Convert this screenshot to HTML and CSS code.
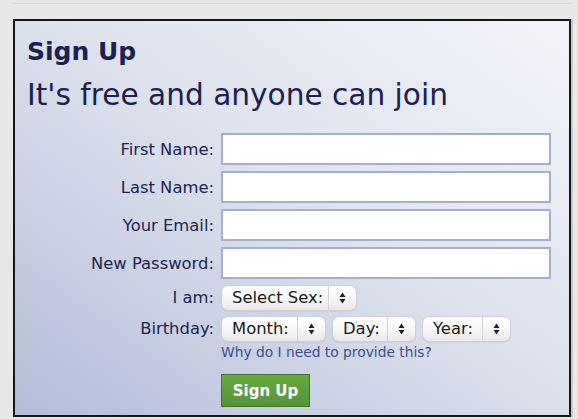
FILE: index.html
```html
<!DOCTYPE html>
<html>
<head>
<meta charset="utf-8">
<link rel="stylesheet" href="styles.css">
</head>
<body>
<div class="page">
  <div class="topline"></div>
  <div class="box">
    <h1 class="title">Sign Up</h1>
    <h2 class="subtitle">It's free and anyone can join</h2>
    <form class="form">
      <label class="lbl">First Name:</label>
      <div class="field"><input class="txt" type="text"></div>
      <label class="lbl">Last Name:</label>
      <div class="field"><input class="txt" type="text"></div>
      <label class="lbl">Your Email:</label>
      <div class="field"><input class="txt" type="text"></div>
      <label class="lbl">New Password:</label>
      <div class="field"><input class="txt" type="password"></div>
      <label class="lbl lbl-sel">I am:</label>
      <div class="field sel-row">
        <span class="pill w-sex"><span class="pill-text">Select Sex:</span><span class="pill-arrows"><svg width="7" height="12" viewBox="0 0 7 12"><path d="M3.5 0.5 L6.5 5 L0.5 5 Z M3.5 11.5 L6.5 7 L0.5 7 Z" fill="#222"/></svg></span></span>
      </div>
      <label class="lbl lbl-sel">Birthday:</label>
      <div class="field sel-row">
        <span class="pill w-month"><span class="pill-text">Month:</span><span class="pill-arrows"><svg width="7" height="12" viewBox="0 0 7 12"><path d="M3.5 0.5 L6.5 5 L0.5 5 Z M3.5 11.5 L6.5 7 L0.5 7 Z" fill="#222"/></svg></span></span>
        <span class="pill w-day"><span class="pill-text">Day:</span><span class="pill-arrows"><svg width="7" height="12" viewBox="0 0 7 12"><path d="M3.5 0.5 L6.5 5 L0.5 5 Z M3.5 11.5 L6.5 7 L0.5 7 Z" fill="#222"/></svg></span></span>
        <span class="pill w-year"><span class="pill-text">Year:</span><span class="pill-arrows"><svg width="7" height="12" viewBox="0 0 7 12"><path d="M3.5 0.5 L6.5 5 L0.5 5 Z M3.5 11.5 L6.5 7 L0.5 7 Z" fill="#222"/></svg></span></span>
      </div>
      <span></span>
      <div class="field why-row"><a class="why" href="#">Why do I need to provide this?</a></div>
      <span></span>
      <div class="field"><button class="btn" type="button">Sign Up</button></div>
    </form>
  </div>
</div>
</body>
</html>
```
FILE: styles.css
```css
html, body {
  margin: 0;
  padding: 0;
  background: #e8e8e8;
}
body {
  font-family: "DejaVu Sans", Verdana, sans-serif;
  color: #1d2551;
}
.page {
  padding: 3px 7px 0 13px;
}
.topline {
  height: 1px;
  background: #d9d9d9;
  width: 558px;
}
.box {
  margin-top: 15px;
  width: 542px;
  height: 394px;
  border: 2px solid #151515;
  background: linear-gradient(to bottom left, #f3f4f9 0%, #dfe3ee 45%, #b4bdd8 100%);
  padding: 0 0 0 12px;
  box-sizing: content-box;
  box-shadow: 2px 0 0 #c9c9c9;
}
.title {
  margin: 16px 0 0 0;
  font-size: 25px;
  font-weight: bold;
  line-height: 30px;
  color: #1b2150;
}
.subtitle {
  margin: 11px 0 0 0;
  font-size: 29.6px;
  font-weight: normal;
  line-height: 35px;
  color: #1b2150;
}
.form {
  margin-top: 20px;
  display: grid;
  grid-template-columns: 187px 1fr;
  column-gap: 7px;
  row-gap: 6px;
  align-items: center;
}
.lbl {
  text-align: right;
  font-size: 16.4px;
  color: #1d2551;
}
.field {
  display: flex;
  align-items: center;
}
.txt {
  width: 330px;
  height: 32px;
  box-sizing: border-box;
  border: 2px solid #a5afcc;
  background: #fff;
  margin: 0;
  padding: 0 4px;
  outline: none;
}
.sel-row {
  gap: 8px;
  padding-left: 1px;
  height: 25px;
}
.lbl-sel {
  line-height: 25px;
}
.pill {
  display: inline-flex;
  align-items: stretch;
  height: 24px;
  box-sizing: border-box;
  border-radius: 6px;
  background: linear-gradient(#ffffff 0%, #f7f7f7 50%, #e9e9e9 100%);
  box-shadow: 0 0 0 1px #cdd0d8, 0 1px 2px rgba(0,0,0,0.14);
  font-size: 16.4px;
  color: #1a1a1a;
}
.pill-text {
  padding: 0 0 0 10px;
  display: flex;
  align-items: center;
  flex: 1;
}
.pill-arrows {
  width: 27px;
  border-left: 1px solid #d3d3d3;
  display: flex;
  align-items: center;
  justify-content: center;
}
.w-sex { width: 134px; }
.w-month { width: 103px; }
.w-day { width: 82px; }
.w-year { width: 87px; }
.why-row {
  margin-top: -3px;
}
.why {
  font-size: 13.8px;
  color: #3b4f8e;
  text-decoration: none;
}
.btn {
  margin-top: 8px;
  width: 89px;
  height: 33px;
  box-sizing: border-box;
  border: 1px solid #3b7626;
  background: linear-gradient(#67a844, #55953a);
  color: #fff;
  font-family: "DejaVu Sans", Verdana, sans-serif;
  font-weight: bold;
  font-size: 15px;
  padding: 0;
}
```
